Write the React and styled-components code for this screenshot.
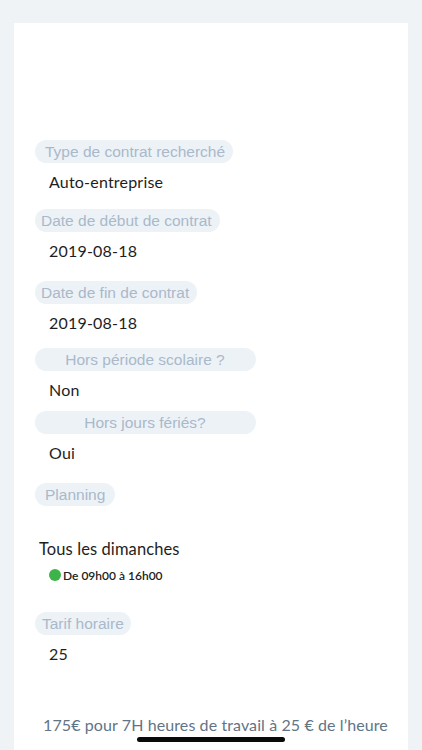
import React from "react";
import styled, { createGlobalStyle } from "styled-components";

const Global = createGlobalStyle`
  html, body { margin: 0; padding: 0; background: #eff3f5; }
  body { height: 750px; overflow: hidden; }
  #root { height: 750px; }
`;

const Page = styled.div`
  position: relative;
  height: 750px;
  padding: 23px 14px 0 14px;
  box-sizing: border-box;
  background: #eff3f5;
  overflow: hidden;
`;

const Card = styled.div`
  background: #ffffff;
  min-height: 760px;
  padding: 117px 0 0 21px;
  box-sizing: border-box;
  display: flex;
  flex-direction: column;
  align-items: flex-start;
`;

const Field = styled.div`
  display: flex;
  flex-direction: column;
  align-items: flex-start;
  margin-top: ${(p) => p.$mt || 0}px;
`;

const Pill = styled.div`
  height: 23px;
  line-height: 23px;
  border-radius: 12px;
  background: #edf2f7;
  color: #a9b9ca;
  font-family: "Liberation Sans", Arial, sans-serif;
  font-size: 15.5px;
  padding: 0 ${(p) => p.$pr ?? 8}px 0 ${(p) => p.$pl ?? 7}px;
  white-space: nowrap;
  ${(p) => (p.$wide ? "width: 221px; box-sizing: border-box; text-align: center;" : "")}
`;

const Value = styled.div`
  margin-top: 9px;
  margin-left: 14px;
  line-height: 20px;
  font-family: Lato, "Open Sans", sans-serif;
  font-size: 16px;
  letter-spacing: 0.2px;
  color: #1e1e1e;
`;

const DayTitle = styled.div`
  margin-top: ${(p) => p.$mt}px;
  margin-left: 4px;
  line-height: 20px;
  font-family: Lato, "Open Sans", sans-serif;
  font-size: 16.5px;
  letter-spacing: 0.1px;
  color: #1e1e1e;
`;

const Slot = styled.div`
  margin-top: 8px;
  margin-left: 14px;
  display: flex;
  align-items: center;
  gap: 2px;
  height: 16px;
  font-family: Lato, "Open Sans", sans-serif;
  font-size: 12px;
  font-weight: 600;
  color: #222;
`;

const Dot = styled.span`
  width: 12px;
  height: 12px;
  border-radius: 50%;
  background: #3db449;
`;

const Summary = styled.div`
  margin-top: ${(p) => p.$mt}px;
  margin-left: 8px;
  line-height: 20px;
  font-family: Lato, "Open Sans", sans-serif;
  font-size: 16px;
  letter-spacing: 0.1px;
  color: #5f7487;
  white-space: nowrap;
`;

const HomeIndicator = styled.div`
  position: absolute;
  left: 137px;
  top: 737px;
  width: 148px;
  height: 5px;
  border-radius: 3px;
  background: #0a0a0a;
`;

export default function App() {
  return (
    <>
      <Global />
      <Page>
        <Card>
          <Field>
            <Pill $pl={10}>Type de contrat recherché</Pill>
            <Value>Auto-entreprise</Value>
          </Field>
          <Field $mt={17}>
            <Pill $pl={6}>Date de début de contrat</Pill>
            <Value>2019-08-18</Value>
          </Field>
          <Field $mt={20}>
            <Pill $pl={6}>Date de fin de contrat</Pill>
            <Value>2019-08-18</Value>
          </Field>
          <Field $mt={15}>
            <Pill $wide>Hors période scolaire ?</Pill>
            <Value>Non</Value>
          </Field>
          <Field $mt={11}>
            <Pill $wide>Hors jours fériés?</Pill>
            <Value>Oui</Value>
          </Field>
          <Field $mt={20}>
            <Pill $pl={10} $pr={10}>Planning</Pill>
          </Field>
          <DayTitle $mt={33}>Tous les dimanches</DayTitle>
          <Slot>
            <Dot />
            De 09h00 à 16h00
          </Slot>
          <Field $mt={29}>
            <Pill $pl={7} $pr={7}>Tarif horaire</Pill>
            <Value>25</Value>
          </Field>
          <Summary $mt={51}>175€ pour 7H heures de travail à 25 € de l’heure</Summary>
        </Card>
        <HomeIndicator />
      </Page>
    </>
  );
}
